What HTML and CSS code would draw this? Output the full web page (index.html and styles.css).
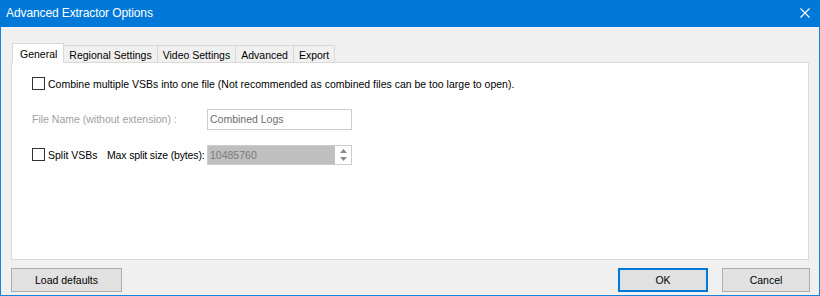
FILE: index.html
```html
<!DOCTYPE html>
<html lang="en">

<head>
    <meta charset="UTF-8">
    <title>Advanced Extractor Options</title>
    <link rel="stylesheet" href="styles.css">
</head>

<body>
    <div class="window">
        <!-- Title bar -->
        <div class="titlebar">
            <span class="title">Advanced Extractor Options</span>
            <svg class="close" width="10" height="10" viewBox="0 0 10 10">
                <path d="M0.5 0.5 L9.5 9.5 M9.5 0.5 L0.5 9.5" stroke="#ffffff" stroke-width="1.1" fill="none" />
            </svg>
        </div>

        <div class="content">
            <div class="tabs">
                <div class="tab selected">General</div>
                <div class="tab">Regional Settings</div>
                <div class="tab">Video Settings</div>
                <div class="tab">Advanced</div>
                <div class="tab">Export</div>
            </div>

            <div class="panel">
                <div class="row row-combine">
                    <span class="checkbox"></span>
                    <span class="check-text">Combine multiple VSBs into one file (Not recommended as combined files can be too large to open).</span>
                </div>

                <div class="row row-name">
                    <span class="field-label disabled">File Name (without extension) :</span>
                    <div class="textbox">Combined Logs</div>
                </div>

                <div class="row row-split">
                    <div class="field-label">
                        <div class="split-check">
                            <span class="checkbox"></span>
                            <span class="check-text">Split VSBs</span>
                        </div>
                        <span class="max-label">Max split size (bytes):</span>
                    </div>
                    <div class="spinner">
                        <div class="spin-value">10485760</div>
                        <div class="spin-buttons">
                            <svg width="7" height="4" viewBox="0 0 7 4"><path d="M0 4 L3.5 0 L7 4 Z" fill="#8a8a8a" /></svg>
                            <svg width="7" height="4" viewBox="0 0 7 4"><path d="M0 0 L3.5 4 L7 0 Z" fill="#8a8a8a" /></svg>
                        </div>
                    </div>
                </div>
            </div>

            <div class="footer">
                <button class="btn btn-load">Load defaults</button>
                <div class="footer-right">
                    <button class="btn btn-ok">OK</button>
                    <button class="btn btn-cancel">Cancel</button>
                </div>
            </div>
        </div>
    </div>
</body>

</html>
```

FILE: styles.css
```css
body {
    margin: 0;
    font-family: "Liberation Sans", Arial, sans-serif;
    font-size: 10.5px;
    color: #000;
}

.window {
    width: 820px;
    height: 296px;
    box-sizing: border-box;
    border: 1px solid #1883d7;
    border-top: none;
    background-color: #f0f0f0;
    display: flex;
    flex-direction: column;
}

.titlebar {
    height: 26px;
    margin: 0 -1px;
    background-color: #0078d7;
    color: #fff;
    display: flex;
    align-items: center;
    justify-content: space-between;
    padding: 0 10px 1px 6px;
    flex-shrink: 0;
}

.title {
    font-family: "Liberation Sans", Arial, sans-serif;
    font-size: 12px;
    letter-spacing: -0.1px;
}

.content {
    flex: 1;
    display: flex;
    flex-direction: column;
    padding: 16px 10px 4px 10px;
}

/* Tabs */
.tabs {
    display: flex;
    align-items: flex-end;
    padding-left: 1px;
    height: 19px;
    white-space: nowrap;
}

.tab {
    height: 17px;
    box-sizing: border-box;
    border: 1px solid #d9d9d9;
    border-bottom: none;
    border-left: none;
    background-color: #f0f0f0;
    padding: 2px 5px 0 5px;
    line-height: 14px;
}

.tab.selected {
    height: 20px;
    margin-bottom: -1px;
    border-left: 1px solid #d9d9d9;
    background-color: #fff;
    padding: 3px 6px 0 7px;
    position: relative;
    z-index: 1;
}

/* Panel */
.panel {
    height: 198px;
    box-sizing: border-box;
    border: 1px solid #d9d9d9;
    background-color: #fff;
    padding: 14px 20px 0 20px;
}

.row {
    display: flex;
    align-items: center;
    white-space: nowrap;
}

.row-combine {
    height: 13px;
}

.row-name {
    margin-top: 19px;
    height: 20px;
}

.row-split {
    margin-top: 16px;
    height: 19px;
}

.checkbox {
    width: 13px;
    height: 13px;
    box-sizing: border-box;
    border: 1px solid #333;
    background-color: #fff;
    flex-shrink: 0;
}

.check-text {
    margin-left: 3px;
}

.field-label {
    width: 175px;
    flex-shrink: 0;
    display: flex;
    align-items: center;
}

.disabled {
    color: #a0a0a0;
}

.split-check {
    width: 75px;
    flex-shrink: 0;
    display: flex;
    align-items: center;
}

.max-label {
    letter-spacing: -0.15px;
}

.textbox {
    width: 145px;
    height: 21px;
    box-sizing: border-box;
    border: 1px solid #cccccc;
    color: #6d6d6d;
    padding: 0 2px;
    line-height: 19px;
}

.spinner {
    width: 145px;
    height: 20px;
    box-sizing: border-box;
    border: 1px solid #cccccc;
    display: flex;
    background-color: #fff;
}

.spin-value {
    flex: 1;
    background-color: #bfbfbf;
    color: #7a7a7a;
    padding: 0 2px;
    line-height: 18px;
}

.spin-buttons {
    width: 16px;
    display: flex;
    flex-direction: column;
    align-items: center;
    justify-content: space-around;
    padding: 1px 0;
}

/* Buttons */
.footer {
    display: flex;
    justify-content: space-between;
    margin-top: 8px;
    margin-right: -1px;
}

.footer-right {
    display: flex;
    gap: 14px;
}

.btn {
    font-family: "Liberation Sans", Arial, sans-serif;
    font-size: 10.5px;
    height: 24px;
    box-sizing: border-box;
    background-color: #e1e1e1;
    border: 1px solid #adadad;
    padding: 0;
    color: #000;
}

.btn-load {
    width: 111px;
}

.btn-ok {
    width: 90px;
    border: 2px solid #0078d7;
}

.btn-cancel {
    width: 88px;
}
```
